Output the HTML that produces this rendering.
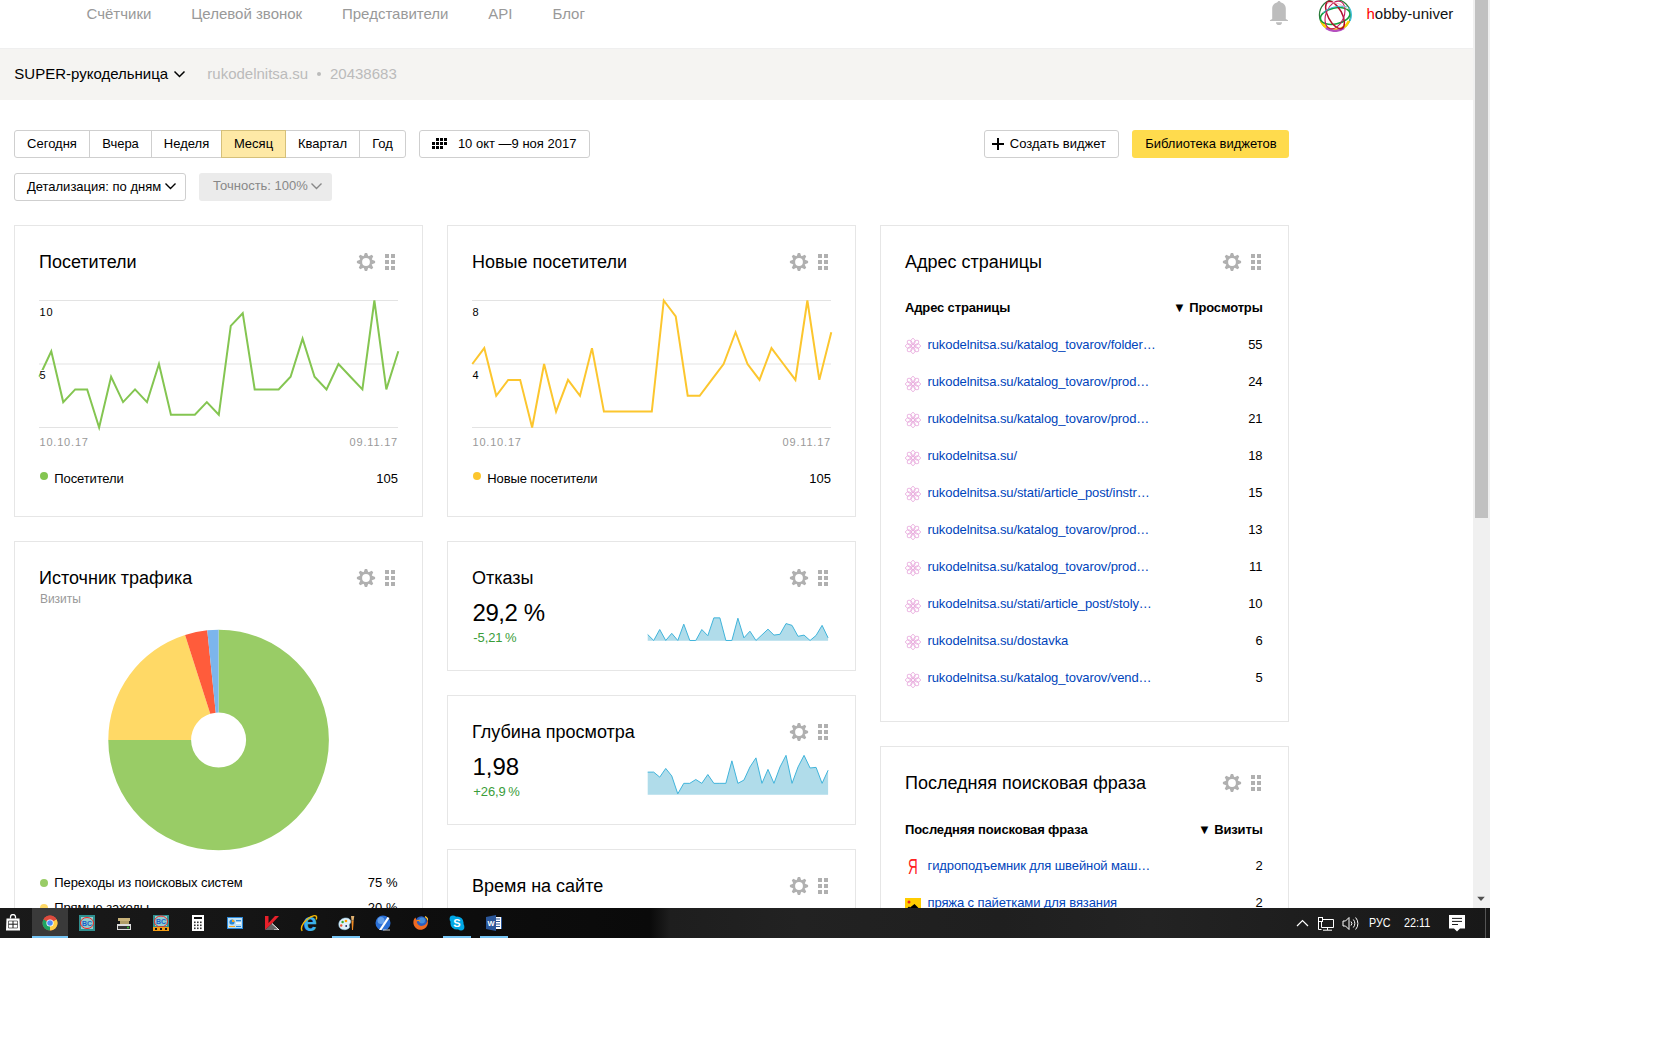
<!DOCTYPE html><html><head><meta charset="utf-8"><style>
html,body{margin:0;padding:0;width:1680px;height:1050px;overflow:hidden;background:#fff;font-family:'Liberation Sans', sans-serif;}
.t{position:absolute;white-space:nowrap;line-height:1;}
.b{position:absolute;}
.ic{position:absolute;}
</style></head><body><div style="position:absolute;left:0;top:0;width:1490px;height:908px;overflow:hidden">
<div class="t" style="left:86.50px;top:6.30px;font-size:15px;color:#999;font-weight:normal;">Счётчики</div>
<div class="t" style="left:191.25px;top:6.30px;font-size:15px;color:#999;font-weight:normal;">Целевой звонок</div>
<div class="t" style="left:342.00px;top:6.30px;font-size:15px;color:#999;font-weight:normal;">Представители</div>
<div class="t" style="left:488.25px;top:6.30px;font-size:15px;color:#999;font-weight:normal;">API</div>
<div class="t" style="left:552.50px;top:6.30px;font-size:15px;color:#999;font-weight:normal;">Блог</div>
<svg class="ic" style="left:1269px;top:0px" width="20" height="26" viewBox="0 0 20 26"><circle cx="10" cy="2.3" r="1.4" fill="#bdbdbd"/><path d="M3.2 19V8.8C3.2 4.6 6 2.2 10 2.2S16.8 4.6 16.8 8.8V19L19 20.2V21H1V20.2z" fill="#bdbdbd"/><path d="M7 22.2h6a3 2.8 0 0 1-6 0z" fill="#bdbdbd"/></svg>
<svg class="ic" style="left:1318px;top:-2px" width="34" height="34" viewBox="-17 -17 34 34">
<g fill="none">
<circle r="15.6" stroke="#2a7a3a" stroke-width="1.2"/>
<path d="M-14 6A15.6 15.6 0 0 0 14 6" stroke="#ffd200" stroke-width="2.6"/>
<path d="M-9 13A15.6 15.6 0 0 0 9 13" stroke="#b54fc0" stroke-width="2.4"/>
<ellipse cx="0" cy="1" rx="15" ry="8" stroke="#14a03c" stroke-width="1.6" transform="rotate(-12)"/>
<ellipse rx="15" ry="7" stroke="#b0102a" stroke-width="1.5" transform="rotate(62)"/>
<ellipse rx="14.5" ry="9" stroke="#c2185b" stroke-width="1.1" transform="rotate(112)"/>
<path d="M-12 -2C-6 -8 4 -10 12 -8" stroke="#40b8e0" stroke-width="1"/>
<path d="M-8 -12C-2 -13 6 -12 12 -6" stroke="#f8b0c0" stroke-width=".9"/>
<path d="M14 -8A15.6 15.6 0 0 1 15 6" stroke="#40c0d8" stroke-width="1.4"/>
</g></svg>
<div class="t" style="left:1366.50px;top:6.05px;font-size:15px;color:#111;font-weight:normal;"><span style="color:#f00">h</span>obby-univer</div>
<div class="b" style="left:0px;top:48px;width:1473px;height:52px;background:#f5f4f2;border-top:1px solid #efefef;box-sizing:border-box"></div>
<div class="t" style="left:14.30px;top:66.10px;font-size:15px;color:#000;font-weight:normal;">SUPER-рукодельница</div>
<svg class="ic" style="left:173px;top:70px" width="13" height="9" viewBox="0 0 13 9"><path d="M1.5 1.5l5 5 5-5" fill="none" stroke="#000" stroke-width="1.5"/></svg>
<div class="t" style="left:207.30px;top:65.80px;font-size:15px;color:#bbb;font-weight:normal;">rukodelnitsa.su</div>
<div class="b" style="left:317px;top:72px;width:4px;height:4px;border-radius:50%;background:#bbb"></div>
<div class="t" style="left:330.00px;top:65.80px;font-size:15px;color:#bbb;font-weight:normal;">20438683</div>
<div class="b" style="left:14px;top:130px;width:392px;height:28px;border:1px solid #cfcfcf;border-radius:3px;box-sizing:border-box"></div>
<div class="b" style="left:89px;top:131px;width:1px;height:26px;background:#cfcfcf"></div>
<div class="b" style="left:151px;top:131px;width:1px;height:26px;background:#cfcfcf"></div>
<div class="b" style="left:285px;top:131px;width:1px;height:26px;background:#cfcfcf"></div>
<div class="b" style="left:359px;top:131px;width:1px;height:26px;background:#cfcfcf"></div>
<div class="b" style="left:221px;top:130px;width:65px;height:28px;background:#fee9a6;border:1px solid #d5c07a;box-sizing:border-box"></div>
<div class="t" style="left:14px;top:137px;width:76px;text-align:center;font-size:13px;color:#000">Сегодня</div>
<div class="t" style="left:89px;top:137px;width:63px;text-align:center;font-size:13px;color:#000">Вчера</div>
<div class="t" style="left:151px;top:137px;width:71px;text-align:center;font-size:13px;color:#000">Неделя</div>
<div class="t" style="left:221px;top:137px;width:65px;text-align:center;font-size:13px;color:#000">Месяц</div>
<div class="t" style="left:285px;top:137px;width:75px;text-align:center;font-size:13px;color:#000">Квартал</div>
<div class="t" style="left:359px;top:137px;width:47px;text-align:center;font-size:13px;color:#000">Год</div>
<div class="b" style="left:419px;top:130px;width:171px;height:28px;border:1px solid #cfcfcf;border-radius:3px;box-sizing:border-box"></div>
<svg class="ic" style="left:432px;top:138px" width="15" height="11" viewBox="0 0 15 11"><rect x="4" y="0" width="3" height="3" fill="#000"/><rect x="8" y="0" width="3" height="3" fill="#000"/><rect x="12" y="0" width="3" height="3" fill="#000"/><rect x="0" y="4" width="3" height="3" fill="#000"/><rect x="4" y="4" width="3" height="3" fill="#000"/><rect x="8" y="4" width="3" height="3" fill="#000"/><rect x="12" y="4" width="3" height="3" fill="#000"/><rect x="0" y="8" width="3" height="3" fill="#000"/><rect x="4" y="8" width="3" height="3" fill="#000"/><rect x="8" y="8" width="3" height="3" fill="#000"/></svg>
<div class="t" style="left:457.90px;top:136.75px;font-size:13px;color:#000;font-weight:normal;">10 окт —9 ноя 2017</div>
<div class="b" style="left:984px;top:130px;width:135px;height:28px;border:1px solid #cfcfcf;border-radius:3px;box-sizing:border-box"></div>
<svg class="ic" style="left:992px;top:138px" width="12" height="12" viewBox="0 0 12 12"><path d="M6 0v12M0 6h12" stroke="#000" stroke-width="2"/></svg>
<div class="t" style="left:1009.80px;top:136.75px;font-size:13px;color:#000;font-weight:normal;">Создать виджет</div>
<div class="b" style="left:1132px;top:130px;width:157px;height:28px;background:#ffdb4d;border-radius:3px"></div>
<div class="t" style="left:1145.20px;top:136.75px;font-size:13px;color:#000;font-weight:normal;">Библиотека виджетов</div>
<div class="b" style="left:14px;top:173px;width:172px;height:28px;border:1px solid #cfcfcf;border-radius:3px;box-sizing:border-box"></div>
<div class="t" style="left:26.90px;top:180.00px;font-size:13px;color:#000;font-weight:normal;">Детализация: по дням</div>
<svg class="ic" style="left:164px;top:182px" width="13" height="9" viewBox="0 0 13 9"><path d="M1.5 1.5l5 5 5-5" fill="none" stroke="#000" stroke-width="1.4"/></svg>
<div class="b" style="left:199px;top:173px;width:133px;height:28px;background:#ebebeb;border-radius:3px"></div>
<div class="t" style="left:213.10px;top:179.30px;font-size:13px;color:#888;font-weight:normal;">Точность: 100%</div>
<svg class="ic" style="left:310px;top:182px" width="13" height="9" viewBox="0 0 13 9"><path d="M1.5 1.5l5 5 5-5" fill="none" stroke="#888" stroke-width="1.4"/></svg>
<div class="b" style="left:14px;top:225px;width:409px;height:292px;border:1px solid #e6e6e6;box-sizing:border-box;background:#fff"></div>
<div class="t" style="left:39.00px;top:252.76px;font-size:18px;color:#000;font-weight:normal;">Посетители</div>
<svg class="ic" style="left:356px;top:252px" width="20" height="20" viewBox="-10 -10 20 20"><circle r="6.4" fill="#b0b0b0"/><path d="M-2.4 -5.5L-1.1 -9.1H1.1L2.4 -5.5z" fill="#b0b0b0" transform="rotate(0)"/><path d="M-2.4 -5.5L-1.1 -9.1H1.1L2.4 -5.5z" fill="#b0b0b0" transform="rotate(45)"/><path d="M-2.4 -5.5L-1.1 -9.1H1.1L2.4 -5.5z" fill="#b0b0b0" transform="rotate(90)"/><path d="M-2.4 -5.5L-1.1 -9.1H1.1L2.4 -5.5z" fill="#b0b0b0" transform="rotate(135)"/><path d="M-2.4 -5.5L-1.1 -9.1H1.1L2.4 -5.5z" fill="#b0b0b0" transform="rotate(180)"/><path d="M-2.4 -5.5L-1.1 -9.1H1.1L2.4 -5.5z" fill="#b0b0b0" transform="rotate(225)"/><path d="M-2.4 -5.5L-1.1 -9.1H1.1L2.4 -5.5z" fill="#b0b0b0" transform="rotate(270)"/><path d="M-2.4 -5.5L-1.1 -9.1H1.1L2.4 -5.5z" fill="#b0b0b0" transform="rotate(315)"/><circle r="3.9" fill="#fff"/></svg>
<svg class="ic" style="left:385px;top:254px" width="10" height="16" viewBox="0 0 10 16"><rect x="0" y="0" width="4" height="4" fill="#b0b0b0"/><rect x="6" y="0" width="4" height="4" fill="#b0b0b0"/><rect x="0" y="6" width="4" height="4" fill="#b0b0b0"/><rect x="6" y="6" width="4" height="4" fill="#b0b0b0"/><rect x="0" y="12" width="4" height="4" fill="#b0b0b0"/><rect x="6" y="12" width="4" height="4" fill="#b0b0b0"/></svg>
<svg class="ic" style="left:0;top:0" width="1680" height="1050" viewBox="0 0 1680 1050">
<line x1="39" y1="300.5" x2="398" y2="300.5" stroke="#e3e3e3" stroke-width="1"/>
<line x1="39" y1="364" x2="398" y2="364" stroke="#e3e3e3" stroke-width="1"/>
<line x1="39" y1="427.5" x2="398" y2="427.5" stroke="#e3e3e3" stroke-width="1"/>
<polyline points="39.30,376.70 51.27,351.30 63.23,402.10 75.20,389.40 87.17,389.40 99.13,427.50 111.10,376.70 123.07,402.10 135.03,389.40 147.00,402.10 158.97,364.00 170.93,414.80 182.90,414.80 194.87,414.80 206.83,402.10 218.80,414.80 230.77,325.90 242.73,313.20 254.70,389.40 266.67,389.40 278.63,389.40 290.60,376.70 302.57,338.60 314.53,376.70 326.50,389.40 338.47,364.00 350.43,376.70 362.40,389.40 374.37,300.50 386.33,389.40 398.30,351.30" fill="none" stroke="#84c551" stroke-width="2" stroke-linejoin="miter"/>
</svg>
<div class="t" style="left:39.50px;top:307.29px;font-size:11px;color:#000;font-weight:normal;background:#fff;padding-right:1px;letter-spacing:0.8px">10</div>
<div class="t" style="left:39.50px;top:370.09px;font-size:11px;color:#000;font-weight:normal;background:#fff;padding-right:1px;letter-spacing:0.8px">5</div>
<div class="t" style="left:39.50px;top:436.69px;font-size:11px;color:#999;font-weight:normal;letter-spacing:0.8px">10.10.17</div>
<div class="t" style="right:1092.00px;top:436.69px;font-size:11px;color:#999;font-weight:normal;letter-spacing:0.8px">09.11.17</div>
<div class="b" style="left:40px;top:472px;width:8px;height:8px;border-radius:50%;background:#84c551"></div>
<div class="t" style="left:54.30px;top:471.90px;font-size:13px;color:#000;font-weight:normal;letter-spacing:-0.12px">Посетители</div>
<div class="t" style="right:1092.00px;top:471.90px;font-size:13px;color:#000;font-weight:normal;">105</div>
<div class="b" style="left:447px;top:225px;width:409px;height:292px;border:1px solid #e6e6e6;box-sizing:border-box;background:#fff"></div>
<div class="t" style="left:472.00px;top:252.76px;font-size:18px;color:#000;font-weight:normal;">Новые посетители</div>
<svg class="ic" style="left:789px;top:252px" width="20" height="20" viewBox="-10 -10 20 20"><circle r="6.4" fill="#b0b0b0"/><path d="M-2.4 -5.5L-1.1 -9.1H1.1L2.4 -5.5z" fill="#b0b0b0" transform="rotate(0)"/><path d="M-2.4 -5.5L-1.1 -9.1H1.1L2.4 -5.5z" fill="#b0b0b0" transform="rotate(45)"/><path d="M-2.4 -5.5L-1.1 -9.1H1.1L2.4 -5.5z" fill="#b0b0b0" transform="rotate(90)"/><path d="M-2.4 -5.5L-1.1 -9.1H1.1L2.4 -5.5z" fill="#b0b0b0" transform="rotate(135)"/><path d="M-2.4 -5.5L-1.1 -9.1H1.1L2.4 -5.5z" fill="#b0b0b0" transform="rotate(180)"/><path d="M-2.4 -5.5L-1.1 -9.1H1.1L2.4 -5.5z" fill="#b0b0b0" transform="rotate(225)"/><path d="M-2.4 -5.5L-1.1 -9.1H1.1L2.4 -5.5z" fill="#b0b0b0" transform="rotate(270)"/><path d="M-2.4 -5.5L-1.1 -9.1H1.1L2.4 -5.5z" fill="#b0b0b0" transform="rotate(315)"/><circle r="3.9" fill="#fff"/></svg>
<svg class="ic" style="left:818px;top:254px" width="10" height="16" viewBox="0 0 10 16"><rect x="0" y="0" width="4" height="4" fill="#b0b0b0"/><rect x="6" y="0" width="4" height="4" fill="#b0b0b0"/><rect x="0" y="6" width="4" height="4" fill="#b0b0b0"/><rect x="6" y="6" width="4" height="4" fill="#b0b0b0"/><rect x="0" y="12" width="4" height="4" fill="#b0b0b0"/><rect x="6" y="12" width="4" height="4" fill="#b0b0b0"/></svg>
<svg class="ic" style="left:0;top:0" width="1680" height="1050" viewBox="0 0 1680 1050">
<line x1="472" y1="300.5" x2="831" y2="300.5" stroke="#e3e3e3" stroke-width="1"/>
<line x1="472" y1="364" x2="831" y2="364" stroke="#e3e3e3" stroke-width="1"/>
<line x1="472" y1="427.5" x2="831" y2="427.5" stroke="#e3e3e3" stroke-width="1"/>
<polyline points="472.30,364.00 484.27,348.12 496.23,395.75 508.20,379.88 520.17,379.88 532.13,427.50 544.10,364.00 556.07,411.62 568.03,379.88 580.00,395.75 591.97,348.12 603.93,411.62 615.90,411.62 627.87,411.62 639.83,411.62 651.80,411.62 663.77,300.50 675.73,316.38 687.70,395.75 699.67,395.75 711.63,379.88 723.60,364.00 735.57,332.25 747.53,364.00 759.50,379.88 771.47,348.12 783.43,364.00 795.40,379.88 807.37,300.50 819.33,379.88 831.30,332.25" fill="none" stroke="#fcc62e" stroke-width="2" stroke-linejoin="miter"/>
</svg>
<div class="t" style="left:472.50px;top:307.29px;font-size:11px;color:#000;font-weight:normal;background:#fff;padding-right:1px;letter-spacing:0.8px">8</div>
<div class="t" style="left:472.50px;top:370.09px;font-size:11px;color:#000;font-weight:normal;background:#fff;padding-right:1px;letter-spacing:0.8px">4</div>
<div class="t" style="left:472.50px;top:436.69px;font-size:11px;color:#999;font-weight:normal;letter-spacing:0.8px">10.10.17</div>
<div class="t" style="right:659.00px;top:436.69px;font-size:11px;color:#999;font-weight:normal;letter-spacing:0.8px">09.11.17</div>
<div class="b" style="left:473px;top:472px;width:8px;height:8px;border-radius:50%;background:#fcc62e"></div>
<div class="t" style="left:487.30px;top:471.90px;font-size:13px;color:#000;font-weight:normal;letter-spacing:-0.12px">Новые посетители</div>
<div class="t" style="right:659.00px;top:471.90px;font-size:13px;color:#000;font-weight:normal;">105</div>
<div class="b" style="left:880px;top:225px;width:409px;height:497px;border:1px solid #e6e6e6;box-sizing:border-box;background:#fff"></div>
<div class="t" style="left:905.00px;top:252.76px;font-size:18px;color:#000;font-weight:normal;">Адрес страницы</div>
<svg class="ic" style="left:1222px;top:252px" width="20" height="20" viewBox="-10 -10 20 20"><circle r="6.4" fill="#b0b0b0"/><path d="M-2.4 -5.5L-1.1 -9.1H1.1L2.4 -5.5z" fill="#b0b0b0" transform="rotate(0)"/><path d="M-2.4 -5.5L-1.1 -9.1H1.1L2.4 -5.5z" fill="#b0b0b0" transform="rotate(45)"/><path d="M-2.4 -5.5L-1.1 -9.1H1.1L2.4 -5.5z" fill="#b0b0b0" transform="rotate(90)"/><path d="M-2.4 -5.5L-1.1 -9.1H1.1L2.4 -5.5z" fill="#b0b0b0" transform="rotate(135)"/><path d="M-2.4 -5.5L-1.1 -9.1H1.1L2.4 -5.5z" fill="#b0b0b0" transform="rotate(180)"/><path d="M-2.4 -5.5L-1.1 -9.1H1.1L2.4 -5.5z" fill="#b0b0b0" transform="rotate(225)"/><path d="M-2.4 -5.5L-1.1 -9.1H1.1L2.4 -5.5z" fill="#b0b0b0" transform="rotate(270)"/><path d="M-2.4 -5.5L-1.1 -9.1H1.1L2.4 -5.5z" fill="#b0b0b0" transform="rotate(315)"/><circle r="3.9" fill="#fff"/></svg>
<svg class="ic" style="left:1251px;top:254px" width="10" height="16" viewBox="0 0 10 16"><rect x="0" y="0" width="4" height="4" fill="#b0b0b0"/><rect x="6" y="0" width="4" height="4" fill="#b0b0b0"/><rect x="0" y="6" width="4" height="4" fill="#b0b0b0"/><rect x="6" y="6" width="4" height="4" fill="#b0b0b0"/><rect x="0" y="12" width="4" height="4" fill="#b0b0b0"/><rect x="6" y="12" width="4" height="4" fill="#b0b0b0"/></svg>
<div class="t" style="left:905.00px;top:301.30px;font-size:13px;color:#000;font-weight:bold;letter-spacing:-0.15px">Адрес страницы</div>
<div class="t" style="right:227.40px;top:301.30px;font-size:13px;color:#000;font-weight:bold;letter-spacing:-0.15px">▼ Просмотры</div>
<svg class="ic" style="left:905px;top:338px" width="16" height="16" viewBox="-8 -8 16 16"><g fill="none" stroke="#e6a4da" stroke-width="0.85"><path d="M0 -1.2C2.9 -3.2 2.9 -6.3 0 -7.6C-2.9 -6.3 -2.9 -3.2 0 -1.2z" transform="rotate(0)"/><path d="M0 -1.2C2.9 -3.2 2.9 -6.3 0 -7.6C-2.9 -6.3 -2.9 -3.2 0 -1.2z" transform="rotate(45)"/><path d="M0 -1.2C2.9 -3.2 2.9 -6.3 0 -7.6C-2.9 -6.3 -2.9 -3.2 0 -1.2z" transform="rotate(90)"/><path d="M0 -1.2C2.9 -3.2 2.9 -6.3 0 -7.6C-2.9 -6.3 -2.9 -3.2 0 -1.2z" transform="rotate(135)"/><path d="M0 -1.2C2.9 -3.2 2.9 -6.3 0 -7.6C-2.9 -6.3 -2.9 -3.2 0 -1.2z" transform="rotate(180)"/><path d="M0 -1.2C2.9 -3.2 2.9 -6.3 0 -7.6C-2.9 -6.3 -2.9 -3.2 0 -1.2z" transform="rotate(225)"/><path d="M0 -1.2C2.9 -3.2 2.9 -6.3 0 -7.6C-2.9 -6.3 -2.9 -3.2 0 -1.2z" transform="rotate(270)"/><path d="M0 -1.2C2.9 -3.2 2.9 -6.3 0 -7.6C-2.9 -6.3 -2.9 -3.2 0 -1.2z" transform="rotate(315)"/></g></svg>
<div class="t" style="left:927.50px;top:338.00px;font-size:13px;color:#04b;font-weight:normal;letter-spacing:-0.1px">rukodelnitsa.su/katalog_tovarov/folder…</div>
<div class="t" style="right:227.40px;top:338.00px;font-size:13px;color:#000;font-weight:normal;">55</div>
<svg class="ic" style="left:905px;top:376px" width="16" height="16" viewBox="-8 -8 16 16"><g fill="none" stroke="#e6a4da" stroke-width="0.85"><path d="M0 -1.2C2.9 -3.2 2.9 -6.3 0 -7.6C-2.9 -6.3 -2.9 -3.2 0 -1.2z" transform="rotate(0)"/><path d="M0 -1.2C2.9 -3.2 2.9 -6.3 0 -7.6C-2.9 -6.3 -2.9 -3.2 0 -1.2z" transform="rotate(45)"/><path d="M0 -1.2C2.9 -3.2 2.9 -6.3 0 -7.6C-2.9 -6.3 -2.9 -3.2 0 -1.2z" transform="rotate(90)"/><path d="M0 -1.2C2.9 -3.2 2.9 -6.3 0 -7.6C-2.9 -6.3 -2.9 -3.2 0 -1.2z" transform="rotate(135)"/><path d="M0 -1.2C2.9 -3.2 2.9 -6.3 0 -7.6C-2.9 -6.3 -2.9 -3.2 0 -1.2z" transform="rotate(180)"/><path d="M0 -1.2C2.9 -3.2 2.9 -6.3 0 -7.6C-2.9 -6.3 -2.9 -3.2 0 -1.2z" transform="rotate(225)"/><path d="M0 -1.2C2.9 -3.2 2.9 -6.3 0 -7.6C-2.9 -6.3 -2.9 -3.2 0 -1.2z" transform="rotate(270)"/><path d="M0 -1.2C2.9 -3.2 2.9 -6.3 0 -7.6C-2.9 -6.3 -2.9 -3.2 0 -1.2z" transform="rotate(315)"/></g></svg>
<div class="t" style="left:927.50px;top:375.00px;font-size:13px;color:#04b;font-weight:normal;letter-spacing:-0.1px">rukodelnitsa.su/katalog_tovarov/prod…</div>
<div class="t" style="right:227.40px;top:375.00px;font-size:13px;color:#000;font-weight:normal;">24</div>
<svg class="ic" style="left:905px;top:412px" width="16" height="16" viewBox="-8 -8 16 16"><g fill="none" stroke="#e6a4da" stroke-width="0.85"><path d="M0 -1.2C2.9 -3.2 2.9 -6.3 0 -7.6C-2.9 -6.3 -2.9 -3.2 0 -1.2z" transform="rotate(0)"/><path d="M0 -1.2C2.9 -3.2 2.9 -6.3 0 -7.6C-2.9 -6.3 -2.9 -3.2 0 -1.2z" transform="rotate(45)"/><path d="M0 -1.2C2.9 -3.2 2.9 -6.3 0 -7.6C-2.9 -6.3 -2.9 -3.2 0 -1.2z" transform="rotate(90)"/><path d="M0 -1.2C2.9 -3.2 2.9 -6.3 0 -7.6C-2.9 -6.3 -2.9 -3.2 0 -1.2z" transform="rotate(135)"/><path d="M0 -1.2C2.9 -3.2 2.9 -6.3 0 -7.6C-2.9 -6.3 -2.9 -3.2 0 -1.2z" transform="rotate(180)"/><path d="M0 -1.2C2.9 -3.2 2.9 -6.3 0 -7.6C-2.9 -6.3 -2.9 -3.2 0 -1.2z" transform="rotate(225)"/><path d="M0 -1.2C2.9 -3.2 2.9 -6.3 0 -7.6C-2.9 -6.3 -2.9 -3.2 0 -1.2z" transform="rotate(270)"/><path d="M0 -1.2C2.9 -3.2 2.9 -6.3 0 -7.6C-2.9 -6.3 -2.9 -3.2 0 -1.2z" transform="rotate(315)"/></g></svg>
<div class="t" style="left:927.50px;top:412.00px;font-size:13px;color:#04b;font-weight:normal;letter-spacing:-0.1px">rukodelnitsa.su/katalog_tovarov/prod…</div>
<div class="t" style="right:227.40px;top:412.00px;font-size:13px;color:#000;font-weight:normal;">21</div>
<svg class="ic" style="left:905px;top:450px" width="16" height="16" viewBox="-8 -8 16 16"><g fill="none" stroke="#e6a4da" stroke-width="0.85"><path d="M0 -1.2C2.9 -3.2 2.9 -6.3 0 -7.6C-2.9 -6.3 -2.9 -3.2 0 -1.2z" transform="rotate(0)"/><path d="M0 -1.2C2.9 -3.2 2.9 -6.3 0 -7.6C-2.9 -6.3 -2.9 -3.2 0 -1.2z" transform="rotate(45)"/><path d="M0 -1.2C2.9 -3.2 2.9 -6.3 0 -7.6C-2.9 -6.3 -2.9 -3.2 0 -1.2z" transform="rotate(90)"/><path d="M0 -1.2C2.9 -3.2 2.9 -6.3 0 -7.6C-2.9 -6.3 -2.9 -3.2 0 -1.2z" transform="rotate(135)"/><path d="M0 -1.2C2.9 -3.2 2.9 -6.3 0 -7.6C-2.9 -6.3 -2.9 -3.2 0 -1.2z" transform="rotate(180)"/><path d="M0 -1.2C2.9 -3.2 2.9 -6.3 0 -7.6C-2.9 -6.3 -2.9 -3.2 0 -1.2z" transform="rotate(225)"/><path d="M0 -1.2C2.9 -3.2 2.9 -6.3 0 -7.6C-2.9 -6.3 -2.9 -3.2 0 -1.2z" transform="rotate(270)"/><path d="M0 -1.2C2.9 -3.2 2.9 -6.3 0 -7.6C-2.9 -6.3 -2.9 -3.2 0 -1.2z" transform="rotate(315)"/></g></svg>
<div class="t" style="left:927.50px;top:449.00px;font-size:13px;color:#04b;font-weight:normal;letter-spacing:-0.1px">rukodelnitsa.su/</div>
<div class="t" style="right:227.40px;top:449.00px;font-size:13px;color:#000;font-weight:normal;">18</div>
<svg class="ic" style="left:905px;top:486px" width="16" height="16" viewBox="-8 -8 16 16"><g fill="none" stroke="#e6a4da" stroke-width="0.85"><path d="M0 -1.2C2.9 -3.2 2.9 -6.3 0 -7.6C-2.9 -6.3 -2.9 -3.2 0 -1.2z" transform="rotate(0)"/><path d="M0 -1.2C2.9 -3.2 2.9 -6.3 0 -7.6C-2.9 -6.3 -2.9 -3.2 0 -1.2z" transform="rotate(45)"/><path d="M0 -1.2C2.9 -3.2 2.9 -6.3 0 -7.6C-2.9 -6.3 -2.9 -3.2 0 -1.2z" transform="rotate(90)"/><path d="M0 -1.2C2.9 -3.2 2.9 -6.3 0 -7.6C-2.9 -6.3 -2.9 -3.2 0 -1.2z" transform="rotate(135)"/><path d="M0 -1.2C2.9 -3.2 2.9 -6.3 0 -7.6C-2.9 -6.3 -2.9 -3.2 0 -1.2z" transform="rotate(180)"/><path d="M0 -1.2C2.9 -3.2 2.9 -6.3 0 -7.6C-2.9 -6.3 -2.9 -3.2 0 -1.2z" transform="rotate(225)"/><path d="M0 -1.2C2.9 -3.2 2.9 -6.3 0 -7.6C-2.9 -6.3 -2.9 -3.2 0 -1.2z" transform="rotate(270)"/><path d="M0 -1.2C2.9 -3.2 2.9 -6.3 0 -7.6C-2.9 -6.3 -2.9 -3.2 0 -1.2z" transform="rotate(315)"/></g></svg>
<div class="t" style="left:927.50px;top:486.00px;font-size:13px;color:#04b;font-weight:normal;letter-spacing:-0.1px">rukodelnitsa.su/stati/article_post/instr…</div>
<div class="t" style="right:227.40px;top:486.00px;font-size:13px;color:#000;font-weight:normal;">15</div>
<svg class="ic" style="left:905px;top:524px" width="16" height="16" viewBox="-8 -8 16 16"><g fill="none" stroke="#e6a4da" stroke-width="0.85"><path d="M0 -1.2C2.9 -3.2 2.9 -6.3 0 -7.6C-2.9 -6.3 -2.9 -3.2 0 -1.2z" transform="rotate(0)"/><path d="M0 -1.2C2.9 -3.2 2.9 -6.3 0 -7.6C-2.9 -6.3 -2.9 -3.2 0 -1.2z" transform="rotate(45)"/><path d="M0 -1.2C2.9 -3.2 2.9 -6.3 0 -7.6C-2.9 -6.3 -2.9 -3.2 0 -1.2z" transform="rotate(90)"/><path d="M0 -1.2C2.9 -3.2 2.9 -6.3 0 -7.6C-2.9 -6.3 -2.9 -3.2 0 -1.2z" transform="rotate(135)"/><path d="M0 -1.2C2.9 -3.2 2.9 -6.3 0 -7.6C-2.9 -6.3 -2.9 -3.2 0 -1.2z" transform="rotate(180)"/><path d="M0 -1.2C2.9 -3.2 2.9 -6.3 0 -7.6C-2.9 -6.3 -2.9 -3.2 0 -1.2z" transform="rotate(225)"/><path d="M0 -1.2C2.9 -3.2 2.9 -6.3 0 -7.6C-2.9 -6.3 -2.9 -3.2 0 -1.2z" transform="rotate(270)"/><path d="M0 -1.2C2.9 -3.2 2.9 -6.3 0 -7.6C-2.9 -6.3 -2.9 -3.2 0 -1.2z" transform="rotate(315)"/></g></svg>
<div class="t" style="left:927.50px;top:523.00px;font-size:13px;color:#04b;font-weight:normal;letter-spacing:-0.1px">rukodelnitsa.su/katalog_tovarov/prod…</div>
<div class="t" style="right:227.40px;top:523.00px;font-size:13px;color:#000;font-weight:normal;">13</div>
<svg class="ic" style="left:905px;top:560px" width="16" height="16" viewBox="-8 -8 16 16"><g fill="none" stroke="#e6a4da" stroke-width="0.85"><path d="M0 -1.2C2.9 -3.2 2.9 -6.3 0 -7.6C-2.9 -6.3 -2.9 -3.2 0 -1.2z" transform="rotate(0)"/><path d="M0 -1.2C2.9 -3.2 2.9 -6.3 0 -7.6C-2.9 -6.3 -2.9 -3.2 0 -1.2z" transform="rotate(45)"/><path d="M0 -1.2C2.9 -3.2 2.9 -6.3 0 -7.6C-2.9 -6.3 -2.9 -3.2 0 -1.2z" transform="rotate(90)"/><path d="M0 -1.2C2.9 -3.2 2.9 -6.3 0 -7.6C-2.9 -6.3 -2.9 -3.2 0 -1.2z" transform="rotate(135)"/><path d="M0 -1.2C2.9 -3.2 2.9 -6.3 0 -7.6C-2.9 -6.3 -2.9 -3.2 0 -1.2z" transform="rotate(180)"/><path d="M0 -1.2C2.9 -3.2 2.9 -6.3 0 -7.6C-2.9 -6.3 -2.9 -3.2 0 -1.2z" transform="rotate(225)"/><path d="M0 -1.2C2.9 -3.2 2.9 -6.3 0 -7.6C-2.9 -6.3 -2.9 -3.2 0 -1.2z" transform="rotate(270)"/><path d="M0 -1.2C2.9 -3.2 2.9 -6.3 0 -7.6C-2.9 -6.3 -2.9 -3.2 0 -1.2z" transform="rotate(315)"/></g></svg>
<div class="t" style="left:927.50px;top:560.00px;font-size:13px;color:#04b;font-weight:normal;letter-spacing:-0.1px">rukodelnitsa.su/katalog_tovarov/prod…</div>
<div class="t" style="right:227.40px;top:560.00px;font-size:13px;color:#000;font-weight:normal;">11</div>
<svg class="ic" style="left:905px;top:598px" width="16" height="16" viewBox="-8 -8 16 16"><g fill="none" stroke="#e6a4da" stroke-width="0.85"><path d="M0 -1.2C2.9 -3.2 2.9 -6.3 0 -7.6C-2.9 -6.3 -2.9 -3.2 0 -1.2z" transform="rotate(0)"/><path d="M0 -1.2C2.9 -3.2 2.9 -6.3 0 -7.6C-2.9 -6.3 -2.9 -3.2 0 -1.2z" transform="rotate(45)"/><path d="M0 -1.2C2.9 -3.2 2.9 -6.3 0 -7.6C-2.9 -6.3 -2.9 -3.2 0 -1.2z" transform="rotate(90)"/><path d="M0 -1.2C2.9 -3.2 2.9 -6.3 0 -7.6C-2.9 -6.3 -2.9 -3.2 0 -1.2z" transform="rotate(135)"/><path d="M0 -1.2C2.9 -3.2 2.9 -6.3 0 -7.6C-2.9 -6.3 -2.9 -3.2 0 -1.2z" transform="rotate(180)"/><path d="M0 -1.2C2.9 -3.2 2.9 -6.3 0 -7.6C-2.9 -6.3 -2.9 -3.2 0 -1.2z" transform="rotate(225)"/><path d="M0 -1.2C2.9 -3.2 2.9 -6.3 0 -7.6C-2.9 -6.3 -2.9 -3.2 0 -1.2z" transform="rotate(270)"/><path d="M0 -1.2C2.9 -3.2 2.9 -6.3 0 -7.6C-2.9 -6.3 -2.9 -3.2 0 -1.2z" transform="rotate(315)"/></g></svg>
<div class="t" style="left:927.50px;top:597.00px;font-size:13px;color:#04b;font-weight:normal;letter-spacing:-0.1px">rukodelnitsa.su/stati/article_post/stoly…</div>
<div class="t" style="right:227.40px;top:597.00px;font-size:13px;color:#000;font-weight:normal;">10</div>
<svg class="ic" style="left:905px;top:634px" width="16" height="16" viewBox="-8 -8 16 16"><g fill="none" stroke="#e6a4da" stroke-width="0.85"><path d="M0 -1.2C2.9 -3.2 2.9 -6.3 0 -7.6C-2.9 -6.3 -2.9 -3.2 0 -1.2z" transform="rotate(0)"/><path d="M0 -1.2C2.9 -3.2 2.9 -6.3 0 -7.6C-2.9 -6.3 -2.9 -3.2 0 -1.2z" transform="rotate(45)"/><path d="M0 -1.2C2.9 -3.2 2.9 -6.3 0 -7.6C-2.9 -6.3 -2.9 -3.2 0 -1.2z" transform="rotate(90)"/><path d="M0 -1.2C2.9 -3.2 2.9 -6.3 0 -7.6C-2.9 -6.3 -2.9 -3.2 0 -1.2z" transform="rotate(135)"/><path d="M0 -1.2C2.9 -3.2 2.9 -6.3 0 -7.6C-2.9 -6.3 -2.9 -3.2 0 -1.2z" transform="rotate(180)"/><path d="M0 -1.2C2.9 -3.2 2.9 -6.3 0 -7.6C-2.9 -6.3 -2.9 -3.2 0 -1.2z" transform="rotate(225)"/><path d="M0 -1.2C2.9 -3.2 2.9 -6.3 0 -7.6C-2.9 -6.3 -2.9 -3.2 0 -1.2z" transform="rotate(270)"/><path d="M0 -1.2C2.9 -3.2 2.9 -6.3 0 -7.6C-2.9 -6.3 -2.9 -3.2 0 -1.2z" transform="rotate(315)"/></g></svg>
<div class="t" style="left:927.50px;top:634.00px;font-size:13px;color:#04b;font-weight:normal;letter-spacing:-0.1px">rukodelnitsa.su/dostavka</div>
<div class="t" style="right:227.40px;top:634.00px;font-size:13px;color:#000;font-weight:normal;">6</div>
<svg class="ic" style="left:905px;top:672px" width="16" height="16" viewBox="-8 -8 16 16"><g fill="none" stroke="#e6a4da" stroke-width="0.85"><path d="M0 -1.2C2.9 -3.2 2.9 -6.3 0 -7.6C-2.9 -6.3 -2.9 -3.2 0 -1.2z" transform="rotate(0)"/><path d="M0 -1.2C2.9 -3.2 2.9 -6.3 0 -7.6C-2.9 -6.3 -2.9 -3.2 0 -1.2z" transform="rotate(45)"/><path d="M0 -1.2C2.9 -3.2 2.9 -6.3 0 -7.6C-2.9 -6.3 -2.9 -3.2 0 -1.2z" transform="rotate(90)"/><path d="M0 -1.2C2.9 -3.2 2.9 -6.3 0 -7.6C-2.9 -6.3 -2.9 -3.2 0 -1.2z" transform="rotate(135)"/><path d="M0 -1.2C2.9 -3.2 2.9 -6.3 0 -7.6C-2.9 -6.3 -2.9 -3.2 0 -1.2z" transform="rotate(180)"/><path d="M0 -1.2C2.9 -3.2 2.9 -6.3 0 -7.6C-2.9 -6.3 -2.9 -3.2 0 -1.2z" transform="rotate(225)"/><path d="M0 -1.2C2.9 -3.2 2.9 -6.3 0 -7.6C-2.9 -6.3 -2.9 -3.2 0 -1.2z" transform="rotate(270)"/><path d="M0 -1.2C2.9 -3.2 2.9 -6.3 0 -7.6C-2.9 -6.3 -2.9 -3.2 0 -1.2z" transform="rotate(315)"/></g></svg>
<div class="t" style="left:927.50px;top:671.00px;font-size:13px;color:#04b;font-weight:normal;letter-spacing:-0.1px">rukodelnitsa.su/katalog_tovarov/vend…</div>
<div class="t" style="right:227.40px;top:671.00px;font-size:13px;color:#000;font-weight:normal;">5</div>
<div class="b" style="left:14px;top:541px;width:409px;height:420px;border:1px solid #e6e6e6;box-sizing:border-box;background:#fff"></div>
<div class="t" style="left:39.00px;top:568.76px;font-size:18px;color:#000;font-weight:normal;">Источник трафика</div>
<svg class="ic" style="left:356px;top:568px" width="20" height="20" viewBox="-10 -10 20 20"><circle r="6.4" fill="#b0b0b0"/><path d="M-2.4 -5.5L-1.1 -9.1H1.1L2.4 -5.5z" fill="#b0b0b0" transform="rotate(0)"/><path d="M-2.4 -5.5L-1.1 -9.1H1.1L2.4 -5.5z" fill="#b0b0b0" transform="rotate(45)"/><path d="M-2.4 -5.5L-1.1 -9.1H1.1L2.4 -5.5z" fill="#b0b0b0" transform="rotate(90)"/><path d="M-2.4 -5.5L-1.1 -9.1H1.1L2.4 -5.5z" fill="#b0b0b0" transform="rotate(135)"/><path d="M-2.4 -5.5L-1.1 -9.1H1.1L2.4 -5.5z" fill="#b0b0b0" transform="rotate(180)"/><path d="M-2.4 -5.5L-1.1 -9.1H1.1L2.4 -5.5z" fill="#b0b0b0" transform="rotate(225)"/><path d="M-2.4 -5.5L-1.1 -9.1H1.1L2.4 -5.5z" fill="#b0b0b0" transform="rotate(270)"/><path d="M-2.4 -5.5L-1.1 -9.1H1.1L2.4 -5.5z" fill="#b0b0b0" transform="rotate(315)"/><circle r="3.9" fill="#fff"/></svg>
<svg class="ic" style="left:385px;top:570px" width="10" height="16" viewBox="0 0 10 16"><rect x="0" y="0" width="4" height="4" fill="#b0b0b0"/><rect x="6" y="0" width="4" height="4" fill="#b0b0b0"/><rect x="0" y="6" width="4" height="4" fill="#b0b0b0"/><rect x="6" y="6" width="4" height="4" fill="#b0b0b0"/><rect x="0" y="12" width="4" height="4" fill="#b0b0b0"/><rect x="6" y="12" width="4" height="4" fill="#b0b0b0"/></svg>
<div class="t" style="left:39.90px;top:593.14px;font-size:12px;color:#999;font-weight:normal;">Визиты</div>
<svg class="ic" style="left:0;top:0" width="1680" height="1050" viewBox="0 0 1680 1050">
<path d="M218.60 629.70A110.3 110.3 0 1 1 108.30 740.00L191.10 740.00A27.5 27.5 0 1 0 218.60 712.50Z" fill="#99cc66"/>
<path d="M108.30 740.00A110.3 110.3 0 0 1 185.07 634.92L210.24 713.80A27.5 27.5 0 0 0 191.10 740.00Z" fill="#ffd966"/>
<path d="M185.07 634.92A110.3 110.3 0 0 1 207.26 630.28L215.77 712.65A27.5 27.5 0 0 0 210.24 713.80Z" fill="#ff5c3b"/>
<path d="M207.26 630.28A110.3 110.3 0 0 1 218.60 629.70L218.60 712.50A27.5 27.5 0 0 0 215.77 712.65Z" fill="#7cb5ec"/>
</svg>
<div class="b" style="left:40px;top:879px;width:8px;height:8px;border-radius:50%;background:#99cc66"></div>
<div class="t" style="left:54.30px;top:876.20px;font-size:13px;color:#000;font-weight:normal;letter-spacing:-0.1px">Переходы из поисковых систем</div>
<div class="t" style="right:1092.50px;top:876.20px;font-size:13px;color:#000;font-weight:normal;">75 %</div>
<div class="b" style="left:40px;top:904px;width:8px;height:8px;border-radius:50%;background:#ffd966"></div>
<div class="t" style="left:54.30px;top:901.20px;font-size:13px;color:#000;font-weight:normal;letter-spacing:-0.1px">Прямые заходы</div>
<div class="t" style="right:1092.50px;top:901.20px;font-size:13px;color:#000;font-weight:normal;">20 %</div>
<div class="b" style="left:447px;top:541px;width:409px;height:130px;border:1px solid #e6e6e6;box-sizing:border-box;background:#fff"></div>
<div class="t" style="left:472.00px;top:568.76px;font-size:18px;color:#000;font-weight:normal;">Отказы</div>
<svg class="ic" style="left:789px;top:568px" width="20" height="20" viewBox="-10 -10 20 20"><circle r="6.4" fill="#b0b0b0"/><path d="M-2.4 -5.5L-1.1 -9.1H1.1L2.4 -5.5z" fill="#b0b0b0" transform="rotate(0)"/><path d="M-2.4 -5.5L-1.1 -9.1H1.1L2.4 -5.5z" fill="#b0b0b0" transform="rotate(45)"/><path d="M-2.4 -5.5L-1.1 -9.1H1.1L2.4 -5.5z" fill="#b0b0b0" transform="rotate(90)"/><path d="M-2.4 -5.5L-1.1 -9.1H1.1L2.4 -5.5z" fill="#b0b0b0" transform="rotate(135)"/><path d="M-2.4 -5.5L-1.1 -9.1H1.1L2.4 -5.5z" fill="#b0b0b0" transform="rotate(180)"/><path d="M-2.4 -5.5L-1.1 -9.1H1.1L2.4 -5.5z" fill="#b0b0b0" transform="rotate(225)"/><path d="M-2.4 -5.5L-1.1 -9.1H1.1L2.4 -5.5z" fill="#b0b0b0" transform="rotate(270)"/><path d="M-2.4 -5.5L-1.1 -9.1H1.1L2.4 -5.5z" fill="#b0b0b0" transform="rotate(315)"/><circle r="3.9" fill="#fff"/></svg>
<svg class="ic" style="left:818px;top:570px" width="10" height="16" viewBox="0 0 10 16"><rect x="0" y="0" width="4" height="4" fill="#b0b0b0"/><rect x="6" y="0" width="4" height="4" fill="#b0b0b0"/><rect x="0" y="6" width="4" height="4" fill="#b0b0b0"/><rect x="6" y="6" width="4" height="4" fill="#b0b0b0"/><rect x="0" y="12" width="4" height="4" fill="#b0b0b0"/><rect x="6" y="12" width="4" height="4" fill="#b0b0b0"/></svg>
<div class="t" style="left:472.50px;top:600.68px;font-size:24px;color:#000;font-weight:normal;letter-spacing:-0.45px">29,2 %</div>
<div class="t" style="left:473.30px;top:631.00px;font-size:13px;color:#3a9d3a;font-weight:normal;letter-spacing:-0.1px">-5,21&#8201;%</div>
<svg class="ic" style="left:0;top:0" width="1680" height="1050" viewBox="0 0 1680 1050">
<polygon points="647.7,640.7 647.70,634.52 653.71,640.48 659.73,629.52 665.74,640.48 671.75,633.33 677.77,640.48 683.78,624.17 689.79,640.48 695.81,640.48 701.82,629.52 707.83,635.71 713.85,617.86 719.86,617.86 725.87,640.48 731.89,640.48 737.90,618.21 743.91,637.86 749.93,631.19 755.94,640.48 761.95,634.88 767.97,629.17 773.98,635.12 779.99,634.29 786.01,623.57 792.02,625.36 798.03,636.31 804.05,635.12 810.06,640.48 816.07,635.48 822.09,625.36 828.10,637.86 828.1,640.7" fill="#b0dcea"/>
<polyline points="647.70,634.52 653.71,640.48 659.73,629.52 665.74,640.48 671.75,633.33 677.77,640.48 683.78,624.17 689.79,640.48 695.81,640.48 701.82,629.52 707.83,635.71 713.85,617.86 719.86,617.86 725.87,640.48 731.89,640.48 737.90,618.21 743.91,637.86 749.93,631.19 755.94,640.48 761.95,634.88 767.97,629.17 773.98,635.12 779.99,634.29 786.01,623.57 792.02,625.36 798.03,636.31 804.05,635.12 810.06,640.48 816.07,635.48 822.09,625.36 828.10,637.86" fill="none" stroke="#40b4db" stroke-width="1"/>
</svg>
<div class="b" style="left:447px;top:695px;width:409px;height:130px;border:1px solid #e6e6e6;box-sizing:border-box;background:#fff"></div>
<div class="t" style="left:472.00px;top:722.76px;font-size:18px;color:#000;font-weight:normal;">Глубина просмотра</div>
<svg class="ic" style="left:789px;top:722px" width="20" height="20" viewBox="-10 -10 20 20"><circle r="6.4" fill="#b0b0b0"/><path d="M-2.4 -5.5L-1.1 -9.1H1.1L2.4 -5.5z" fill="#b0b0b0" transform="rotate(0)"/><path d="M-2.4 -5.5L-1.1 -9.1H1.1L2.4 -5.5z" fill="#b0b0b0" transform="rotate(45)"/><path d="M-2.4 -5.5L-1.1 -9.1H1.1L2.4 -5.5z" fill="#b0b0b0" transform="rotate(90)"/><path d="M-2.4 -5.5L-1.1 -9.1H1.1L2.4 -5.5z" fill="#b0b0b0" transform="rotate(135)"/><path d="M-2.4 -5.5L-1.1 -9.1H1.1L2.4 -5.5z" fill="#b0b0b0" transform="rotate(180)"/><path d="M-2.4 -5.5L-1.1 -9.1H1.1L2.4 -5.5z" fill="#b0b0b0" transform="rotate(225)"/><path d="M-2.4 -5.5L-1.1 -9.1H1.1L2.4 -5.5z" fill="#b0b0b0" transform="rotate(270)"/><path d="M-2.4 -5.5L-1.1 -9.1H1.1L2.4 -5.5z" fill="#b0b0b0" transform="rotate(315)"/><circle r="3.9" fill="#fff"/></svg>
<svg class="ic" style="left:818px;top:724px" width="10" height="16" viewBox="0 0 10 16"><rect x="0" y="0" width="4" height="4" fill="#b0b0b0"/><rect x="6" y="0" width="4" height="4" fill="#b0b0b0"/><rect x="0" y="6" width="4" height="4" fill="#b0b0b0"/><rect x="6" y="6" width="4" height="4" fill="#b0b0b0"/><rect x="0" y="12" width="4" height="4" fill="#b0b0b0"/><rect x="6" y="12" width="4" height="4" fill="#b0b0b0"/></svg>
<div class="t" style="left:472.50px;top:754.68px;font-size:24px;color:#000;font-weight:normal;">1,98</div>
<div class="t" style="left:473.30px;top:785.00px;font-size:13px;color:#3a9d3a;font-weight:normal;letter-spacing:-0.1px">+26,9&#8201;%</div>
<svg class="ic" style="left:0;top:0" width="1680" height="1050" viewBox="0 0 1680 1050">
<polygon points="647.7,794.8 647.70,772.14 653.71,772.14 659.73,777.14 665.74,768.45 671.75,775.95 677.77,793.81 683.78,783.33 689.79,783.33 695.81,779.52 701.82,783.33 707.83,774.52 713.85,783.33 719.86,783.33 725.87,783.33 731.89,760.83 737.90,783.33 743.91,780.12 749.93,767.02 755.94,757.86 761.95,783.33 767.97,769.40 773.98,783.33 779.99,767.02 786.01,755.36 792.02,783.33 798.03,767.02 804.05,755.36 810.06,767.98 816.07,767.38 822.09,783.33 828.10,770.24 828.1,794.8" fill="#b0dcea"/>
<polyline points="647.70,772.14 653.71,772.14 659.73,777.14 665.74,768.45 671.75,775.95 677.77,793.81 683.78,783.33 689.79,783.33 695.81,779.52 701.82,783.33 707.83,774.52 713.85,783.33 719.86,783.33 725.87,783.33 731.89,760.83 737.90,783.33 743.91,780.12 749.93,767.02 755.94,757.86 761.95,783.33 767.97,769.40 773.98,783.33 779.99,767.02 786.01,755.36 792.02,783.33 798.03,767.02 804.05,755.36 810.06,767.98 816.07,767.38 822.09,783.33 828.10,770.24" fill="none" stroke="#40b4db" stroke-width="1"/>
</svg>
<div class="b" style="left:447px;top:849px;width:409px;height:130px;border:1px solid #e6e6e6;box-sizing:border-box;background:#fff"></div>
<div class="t" style="left:472.00px;top:876.76px;font-size:18px;color:#000;font-weight:normal;">Время на сайте</div>
<svg class="ic" style="left:789px;top:876px" width="20" height="20" viewBox="-10 -10 20 20"><circle r="6.4" fill="#b0b0b0"/><path d="M-2.4 -5.5L-1.1 -9.1H1.1L2.4 -5.5z" fill="#b0b0b0" transform="rotate(0)"/><path d="M-2.4 -5.5L-1.1 -9.1H1.1L2.4 -5.5z" fill="#b0b0b0" transform="rotate(45)"/><path d="M-2.4 -5.5L-1.1 -9.1H1.1L2.4 -5.5z" fill="#b0b0b0" transform="rotate(90)"/><path d="M-2.4 -5.5L-1.1 -9.1H1.1L2.4 -5.5z" fill="#b0b0b0" transform="rotate(135)"/><path d="M-2.4 -5.5L-1.1 -9.1H1.1L2.4 -5.5z" fill="#b0b0b0" transform="rotate(180)"/><path d="M-2.4 -5.5L-1.1 -9.1H1.1L2.4 -5.5z" fill="#b0b0b0" transform="rotate(225)"/><path d="M-2.4 -5.5L-1.1 -9.1H1.1L2.4 -5.5z" fill="#b0b0b0" transform="rotate(270)"/><path d="M-2.4 -5.5L-1.1 -9.1H1.1L2.4 -5.5z" fill="#b0b0b0" transform="rotate(315)"/><circle r="3.9" fill="#fff"/></svg>
<svg class="ic" style="left:818px;top:878px" width="10" height="16" viewBox="0 0 10 16"><rect x="0" y="0" width="4" height="4" fill="#b0b0b0"/><rect x="6" y="0" width="4" height="4" fill="#b0b0b0"/><rect x="0" y="6" width="4" height="4" fill="#b0b0b0"/><rect x="6" y="6" width="4" height="4" fill="#b0b0b0"/><rect x="0" y="12" width="4" height="4" fill="#b0b0b0"/><rect x="6" y="12" width="4" height="4" fill="#b0b0b0"/></svg>
<div class="b" style="left:880px;top:746px;width:409px;height:300px;border:1px solid #e6e6e6;box-sizing:border-box;background:#fff"></div>
<div class="t" style="left:905.00px;top:773.76px;font-size:18px;color:#000;font-weight:normal;">Последняя поисковая фраза</div>
<svg class="ic" style="left:1222px;top:773px" width="20" height="20" viewBox="-10 -10 20 20"><circle r="6.4" fill="#b0b0b0"/><path d="M-2.4 -5.5L-1.1 -9.1H1.1L2.4 -5.5z" fill="#b0b0b0" transform="rotate(0)"/><path d="M-2.4 -5.5L-1.1 -9.1H1.1L2.4 -5.5z" fill="#b0b0b0" transform="rotate(45)"/><path d="M-2.4 -5.5L-1.1 -9.1H1.1L2.4 -5.5z" fill="#b0b0b0" transform="rotate(90)"/><path d="M-2.4 -5.5L-1.1 -9.1H1.1L2.4 -5.5z" fill="#b0b0b0" transform="rotate(135)"/><path d="M-2.4 -5.5L-1.1 -9.1H1.1L2.4 -5.5z" fill="#b0b0b0" transform="rotate(180)"/><path d="M-2.4 -5.5L-1.1 -9.1H1.1L2.4 -5.5z" fill="#b0b0b0" transform="rotate(225)"/><path d="M-2.4 -5.5L-1.1 -9.1H1.1L2.4 -5.5z" fill="#b0b0b0" transform="rotate(270)"/><path d="M-2.4 -5.5L-1.1 -9.1H1.1L2.4 -5.5z" fill="#b0b0b0" transform="rotate(315)"/><circle r="3.9" fill="#fff"/></svg>
<svg class="ic" style="left:1251px;top:775px" width="10" height="16" viewBox="0 0 10 16"><rect x="0" y="0" width="4" height="4" fill="#b0b0b0"/><rect x="6" y="0" width="4" height="4" fill="#b0b0b0"/><rect x="0" y="6" width="4" height="4" fill="#b0b0b0"/><rect x="6" y="6" width="4" height="4" fill="#b0b0b0"/><rect x="0" y="12" width="4" height="4" fill="#b0b0b0"/><rect x="6" y="12" width="4" height="4" fill="#b0b0b0"/></svg>
<div class="t" style="left:905.00px;top:823.00px;font-size:13px;color:#000;font-weight:bold;letter-spacing:-0.15px">Последняя поисковая фраза</div>
<div class="t" style="right:227.40px;top:823.00px;font-size:13px;color:#000;font-weight:bold;letter-spacing:-0.15px">▼ Визиты</div>
<div class="t" style="left:908.3px;top:855.9px;font-size:22.5px;color:#f22;line-height:1;transform-origin:0 0;transform:scaleX(0.6)">Я</div>
<div class="t" style="left:927.50px;top:858.60px;font-size:13px;color:#04b;font-weight:normal;letter-spacing:-0.1px">гидроподъемник для швейной маш…</div>
<div class="t" style="right:227.40px;top:859.00px;font-size:13px;color:#000;font-weight:normal;">2</div>
<svg class="ic" style="left:905px;top:898px" width="16" height="14" viewBox="0 0 16 14"><rect width="16" height="14" fill="#fc0"/><path d="M1.5 11L4 8.5 5 9.5 9.5 6 12 8.5 14.5 11V14H1.5z" fill="#000"/><circle cx="4" cy="4" r="1.5" fill="#e22"/></svg>
<div class="t" style="left:927.50px;top:895.60px;font-size:13px;color:#04b;font-weight:normal;letter-spacing:-0.1px">пряжа с пайетками для вязания</div>
<div class="t" style="right:227.40px;top:895.80px;font-size:13px;color:#000;font-weight:normal;">2</div>
<div class="b" style="left:1473px;top:0px;width:17px;height:908px;background:#f0f0f0"></div>
<div class="b" style="left:1475px;top:0px;width:13px;height:518px;background:#c1c1c1"></div>
<svg class="ic" style="left:1476px;top:895px" width="10" height="8" viewBox="0 0 10 8"><path d="M1.2 1.8h7.6L5 6z" fill="#505050"/></svg>
</div>
<div class="b" style="left:0px;top:908px;width:1490px;height:30px;background:linear-gradient(90deg,#1a1a1a 0px,#151515 250px,#0e0e0e 420px,#0a0a0a 650px,#1e1e1e 670px,#222 800px,#1f1f1f 1000px,#232323 1150px,#1c1c1c 1350px,#181818 1490px)"></div>
<div class="b" style="left:32px;top:908px;width:36px;height:30px;background:#3a3a3a"></div>
<div class="b" style="left:32px;top:936px;width:36px;height:2px;background:#76c5f5"></div>
<div class="b" style="left:332px;top:936px;width:28px;height:2px;background:#76c5f5"></div>
<div class="b" style="left:443px;top:936px;width:28px;height:2px;background:#76c5f5"></div>
<div class="b" style="left:480px;top:936px;width:28px;height:2px;background:#76c5f5"></div>
<svg class="ic" style="left:5px;top:914px" width="16" height="17" viewBox="0 0 16 17"><path d="M5.5 4.5V3a2.5 2.5 0 0 1 5 0v1.5" fill="none" stroke="#fff" stroke-width="1.3"/><path d="M1.5 4.5h13l.5 12H1z" fill="#fff"/><path d="M3.5 10.2h9M8 7v7" stroke="#1a1a1a" stroke-width="1"/><path d="M3.5 7h9v7h-9z" fill="none" stroke="#1a1a1a" stroke-width=".6"/></svg>
<svg class="ic" style="left:42px;top:915px" width="16" height="16" viewBox="0 0 16 16"><circle cx="8" cy="8" r="7.5" fill="#dd4b3e"/><path d="M8 8L1.5 4.25A7.5 7.5 0 0 0 8 15.5z" fill="#1da462"/><path d="M8 8L8 15.5A7.5 7.5 0 0 0 14.5 4.25z" fill="#ffcd46"/><path d="M8 8L1.5 4.25A7.5 7.5 0 0 1 14.5 4.25z" fill="#dd4b3e"/><circle cx="8" cy="8" r="3.6" fill="#fff"/><circle cx="8" cy="8" r="2.8" fill="#4c8bf5"/></svg>
<svg class="ic" style="left:79px;top:915px" width="16" height="16" viewBox="0 0 16 16"><rect width="16" height="16" fill="#2f8f8f"/><rect x="2" y="2" width="12" height="12" fill="#8fcfcf"/><ellipse cx="8" cy="8" rx="6.5" ry="5.5" fill="none" stroke="#f22" stroke-width="1"/><text x="8" y="10.5" font-size="7" font-family="Liberation Sans" font-weight="bold" fill="#1e5cc8" text-anchor="middle">BC</text></svg>
<svg class="ic" style="left:116px;top:917px" width="16" height="14" viewBox="0 0 16 14"><path d="M2 1h12v3H2z" fill="#c8b27a"/><path d="M1 7h14v6H1z" fill="#ddd"/><path d="M2 9h12v3H2z" fill="#333"/><circle cx="12" cy="10.5" r="1" fill="#3c3"/><path d="M4 4h9v3H4z" fill="#b09d66"/></svg>
<svg class="ic" style="left:153px;top:915px" width="16" height="16" viewBox="0 0 16 16"><rect width="16" height="16" fill="#2f8f8f"/><rect x="2" y="1" width="12" height="10" fill="#8fcfcf"/><ellipse cx="8" cy="6.5" rx="6.5" ry="5.5" fill="none" stroke="#f22" stroke-width="1"/><text x="8" y="9" font-size="7" font-family="Liberation Sans" font-weight="bold" fill="#1e5cc8" text-anchor="middle">BC</text><rect y="12" width="16" height="4" fill="#f39c12"/><rect x="2" y="13" width="2" height="2" fill="#111"/><rect x="7" y="13" width="2" height="2" fill="#111"/><rect x="12" y="13" width="2" height="2" fill="#111"/></svg>
<svg class="ic" style="left:192px;top:915px" width="12" height="16" viewBox="0 0 12 16"><rect width="12" height="16" fill="#fff"/><rect x="2" y="2" width="8" height="2" fill="#111"/><rect x="2" y="6.5" width="1.6" height="1.6" fill="#333"/><rect x="5" y="6.5" width="1.6" height="1.6" fill="#333"/><rect x="8" y="6.5" width="1.6" height="1.6" fill="#333"/><rect x="2" y="9.5" width="1.6" height="1.6" fill="#333"/><rect x="5" y="9.5" width="1.6" height="1.6" fill="#333"/><rect x="8" y="9.5" width="1.6" height="1.6" fill="#333"/><rect x="2" y="12.5" width="1.6" height="1.6" fill="#333"/><rect x="5" y="12.5" width="1.6" height="1.6" fill="#333"/><rect x="8" y="12.5" width="1.6" height="1.6" fill="#333"/></svg>
<svg class="ic" style="left:227px;top:917px" width="16" height="12" viewBox="0 0 16 12"><rect width="16" height="12" fill="#2b88d8"/><rect x="1" y="1" width="14" height="10" fill="#bfe2f7"/><circle cx="5" cy="5" r="2.6" fill="#2b88d8"/><path d="M5 5V2.4A2.6 2.6 0 0 1 7.6 5z" fill="#f5a623"/><rect x="9" y="3" width="5" height="1.3" fill="#2b88d8"/><rect x="9" y="5.5" width="5" height="1.3" fill="#fff"/><rect x="2" y="9" width="6" height="1" fill="#f5a623"/><rect x="9" y="9" width="5" height="1" fill="#2b88d8"/></svg>
<svg class="ic" style="left:265px;top:916px" width="14" height="14" viewBox="0 0 14 14"><path d="M0 0h3.5v7L10 0h4L7 7.5 0 14z" fill="#e8202a"/><path d="M0 14L7 7.5l7 6.5z" fill="#666"/><path d="M7 7.5l7 6.5H9" fill="none" stroke="#fff" stroke-width="1"/></svg>
<svg class="ic" style="left:300px;top:914px" width="18" height="18" viewBox="0 0 18 18"><text x="10.3" y="16.9" font-size="25" font-family="Liberation Sans" font-weight="bold" fill="#3bb0ec" text-anchor="middle">e</text><path d="M2.2 16.8C-0.5 13 5.5 4 13.5 1.8 16.3 1 17.2 2.6 16.2 5.5" fill="none" stroke="#f5b800" stroke-width="1.4"/></svg>
<svg class="ic" style="left:338px;top:915px" width="17" height="16" viewBox="0 0 17 16"><path d="M0.8 9.5C0.8 5.5 4 3 8 3c3 0 4.8 1.8 4.8 3.8 0 1.8-1.6 2-1.6 3.3 0 1.3.8 2.1-.3 3.1C9.6 14.3 7.5 15 5.2 14.6 2.6 14.1 0.8 12.3 0.8 9.5z" fill="#dff0fa" stroke="#9cd0ee" stroke-width=".6"/><circle cx="3.2" cy="10.5" r="1.2" fill="#e53"/><circle cx="4.6" cy="7" r="1.2" fill="#3a3"/><circle cx="8" cy="6" r="1.3" fill="#f90"/><circle cx="8.2" cy="11" r="0.9" fill="#225"/><path d="M13.5 5.5h2.2L15 15h-1z" fill="#f08a24"/><path d="M13 1h3.3l-.7 4.5h-2z" fill="#e0b070"/></svg>
<svg class="ic" style="left:375px;top:915px" width="16" height="16" viewBox="0 0 16 16"><circle cx="8" cy="8" r="7.5" fill="#2a6fd6"/><circle cx="6" cy="5.5" r="3.5" fill="#7fb6f5" opacity=".7"/><path d="M12.5 2L4 15h2.5L14.5 3z" fill="#fff"/><path d="M8 15h7" stroke="#ccc" stroke-width="1"/></svg>
<svg class="ic" style="left:413px;top:915px" width="15" height="15" viewBox="0 0 15 15"><circle cx="8.3" cy="6.8" r="5.6" fill="#2a5fc0"/><circle cx="9" cy="5.5" r="3" fill="#4a9ae0" opacity=".8"/><path d="M2.2 2.5C0.6 4.5 0 6.6 0.6 9.2 1.5 12.6 4.4 14.8 7.6 14.8c3.6 0 6.6-2.6 7.2-6 .3-1.6 0-3-.6-4.2.3 2.7-1.4 5.5-4.3 6.2C7.2 11.4 4.6 10 4 7.8 3.8 7 3.9 6.2 4.4 5.5 3.5 5.3 2.9 4.5 2.9 3.5z" fill="#ee6a22"/><path d="M12 1.5c1.6.8 2.6 2.3 3 4" fill="none" stroke="#ffc43a" stroke-width="1.3"/><path d="M4 5.8c1-.6 2.4-.3 3 .6" fill="none" stroke="#f59020" stroke-width="1.2"/></svg>
<svg class="ic" style="left:449px;top:915px" width="16" height="16" viewBox="0 0 16 16"><circle cx="8" cy="8" r="6.6" fill="#00a8e6"/><circle cx="4" cy="4" r="3.4" fill="#00a8e6"/><circle cx="12" cy="12" r="3.4" fill="#00a8e6"/><text x="8" y="12" font-size="11" font-family="Liberation Sans" font-weight="bold" fill="#fff" text-anchor="middle">S</text></svg>
<svg class="ic" style="left:486px;top:915px" width="16" height="16" viewBox="0 0 16 16"><rect x="6" y="2" width="10" height="12" fill="#fff"/><path d="M9 4h5M9 6.5h5M9 9h5M9 11.5h5" stroke="#2b579a" stroke-width="1.1"/><path d="M0 2L10 0v16L0 14z" fill="#2b579a"/><text x="5" y="11" font-size="7.5" font-family="Liberation Sans" font-weight="bold" fill="#fff" text-anchor="middle">W</text><rect x="15" y="2" width="1" height="12" fill="#2b579a"/></svg>
<svg class="ic" style="left:1296px;top:919px" width="13" height="8" viewBox="0 0 13 8"><path d="M1 7l5.5-5.5L12 7" fill="none" stroke="#fff" stroke-width="1.2"/></svg>
<svg class="ic" style="left:1317px;top:917px" width="18" height="14" viewBox="0 0 18 14"><path d="M4.5 2.5h12v8h-12zM10.5 10.5v2.5M6 13.2h9" fill="none" stroke="#fff" stroke-width="1"/><rect x="1.5" y="0.5" width="4" height="4" fill="#1a1a1a" stroke="#fff" stroke-width="1"/><path d="M1.5 4.5v8h3" fill="none" stroke="#fff" stroke-width="1"/></svg>
<svg class="ic" style="left:1342px;top:916px" width="17" height="15" viewBox="0 0 17 15"><path d="M1 5h2.5L7 1.5v12L3.5 10H1z" fill="none" stroke="#fff" stroke-width="1"/><path d="M9 5.5a3 3 0 0 1 0 4M11.3 3.5a6 6 0 0 1 0 8M13.6 1.5a9 9 0 0 1 0 12" fill="none" stroke="#fff" stroke-width="1"/></svg>
<div class="t" style="left:1369.4px;top:916.8px;font-size:12.5px;color:#fff;transform-origin:0 0;transform:scaleX(0.86)">РУС</div>
<div class="t" style="left:1403.75px;top:916.8px;font-size:12.5px;color:#fff;transform-origin:0 0;transform:scaleX(0.87)">22:11</div>
<svg class="ic" style="left:1449px;top:915px" width="16" height="17" viewBox="0 0 16 17"><path d="M0 0h16v13.5h-5L8 16.5 5 13.5H0z" fill="#fff"/><path d="M3 3.4h10M3 6.4h10M3 9.5h6" stroke="#1a1a1a" stroke-width="1"/></svg>
<div class="b" style="left:1485px;top:908px;width:1px;height:30px;background:#555"></div>
</body></html>
